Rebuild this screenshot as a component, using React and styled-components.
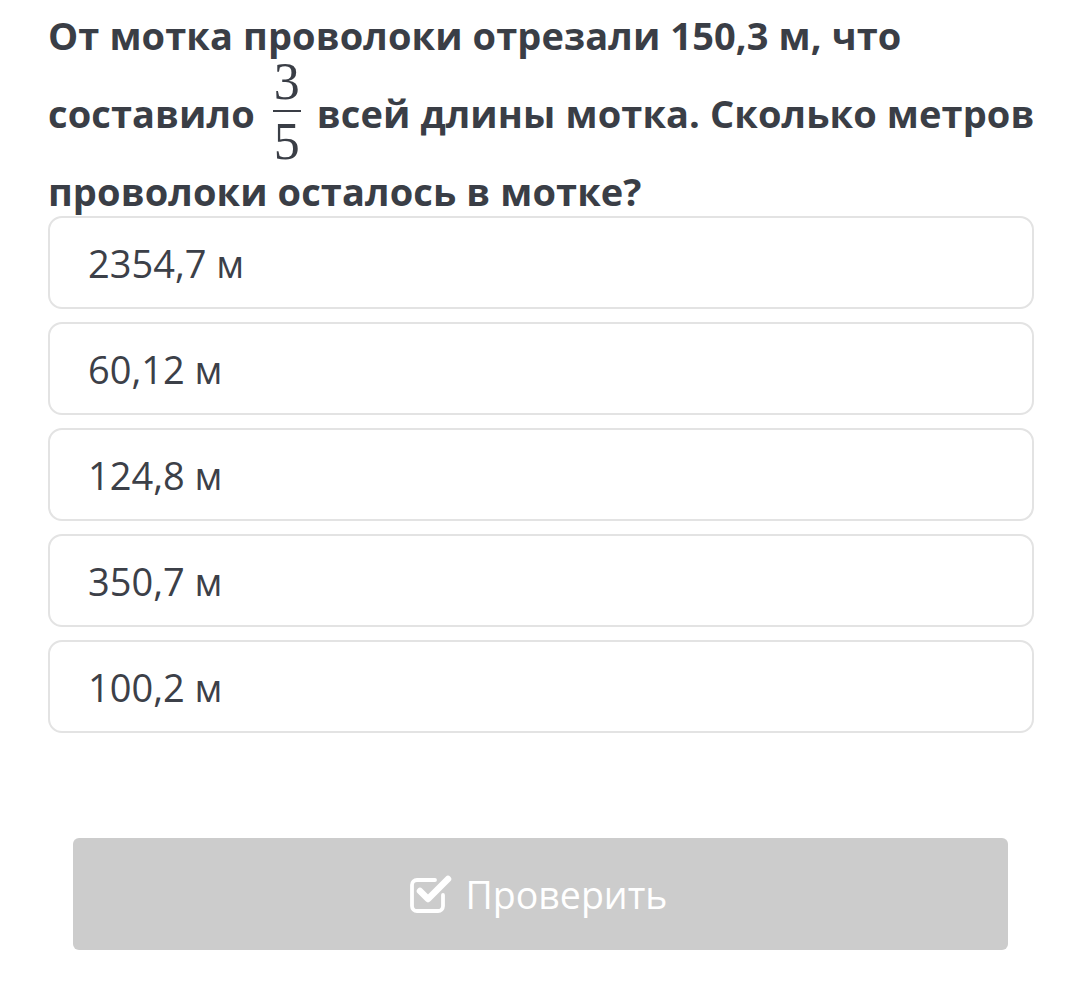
import React from 'react';
import styled, { createGlobalStyle } from 'styled-components';

const GlobalStyle = createGlobalStyle`
  html, body {
    margin: 0;
    padding: 0;
    background: #FFF;
  }
  body {
    font-family: "Open Sans", "Liberation Sans", sans-serif;
    color: #3a3e46;
  }
`

// Styled Components

const Page = styled.div`
  width: 1070px;
  height: 995px;
  padding: 0 36px 0 48px;
  box-sizing: border-box;
  display: flex;
  flex-direction: column;
`

const Question = styled.h1`
  margin: -4px -20px 0 0;
  font-size: 38px;
  font-weight: 700;
  line-height: 78px;
  color: #3a3e46;
  letter-spacing: 0.1px;
`

const Fraction = styled.span`
  display: inline-flex;
  flex-direction: column;
  align-items: center;
  vertical-align: middle;
  margin: -34px 16px -22px 18px;
  font-family: "Liberation Serif", "DejaVu Serif", serif;
  font-weight: 400;
  font-size: 52px;
  line-height: 46px;
`

const Numerator = styled.span`
  margin-bottom: 5px;
`

const Denominator = styled.span`
  margin-top: 7px;
`

const FracLine = styled.span`
  width: 28px;
  height: 2px;
  background: #3a3e46;
`

const Options = styled.div`
  display: flex;
  flex-direction: column;
  gap: 13px;
  margin-top: -14px;
`

const Option = styled.div`
  height: 93px;
  box-sizing: border-box;
  border: 2px solid #e3e3e3;
  border-radius: 14px;
  padding: 0 38px;
  display: flex;
  align-items: center;
  font-size: 38px;
  color: #3c4048;
`

const CheckButton = styled.button`
  margin: 105px 26px 0 25px;
  height: 112px;
  border: 0;
  border-radius: 6px;
  background: #cccccc;
  color: #fff;
  font-family: "Open Sans", "Liberation Sans", sans-serif;
  font-size: 37.5px;
  display: flex;
  align-items: center;
  justify-content: center;
  gap: 14px;
  padding: 0 4px 0 0;
`

// Check icon (square with tick leaving the box)

const CheckIcon = () => (
  <svg width="42" height="40" viewBox="0 0 42 40" fill="none">
    <path d="M33 21 V32 a5 5 0 0 1 -5 5 H7 a5 5 0 0 1 -5 -5 V11 a5 5 0 0 1 5 -5 H25"
      stroke="#fff" strokeWidth="3.8" strokeLinecap="round" />
    <path d="M10 17 L18 25 L38 5" stroke="#fff" strokeWidth="6.5" strokeLinecap="round" strokeLinejoin="round" />
  </svg>
);

const answers = ['2354,7 м', '60,12 м', '124,8 м', '350,7 м', '100,2 м'];

export default function App() {
  return (
    <Page>
      <GlobalStyle />
      <Question>
        От мотка проволоки отрезали 150,3 м, что составило
        <Fraction>
          <Numerator>3</Numerator>
          <FracLine />
          <Denominator>5</Denominator>
        </Fraction>
        всей длины мотка. Сколько метров проволоки осталось в мотке?
      </Question>
      <Options>
        {answers.map(a => (
          <Option key={a}>{a}</Option>
        ))}
      </Options>
      <CheckButton>
        <CheckIcon />
        Проверить
      </CheckButton>
    </Page>
  );
}
